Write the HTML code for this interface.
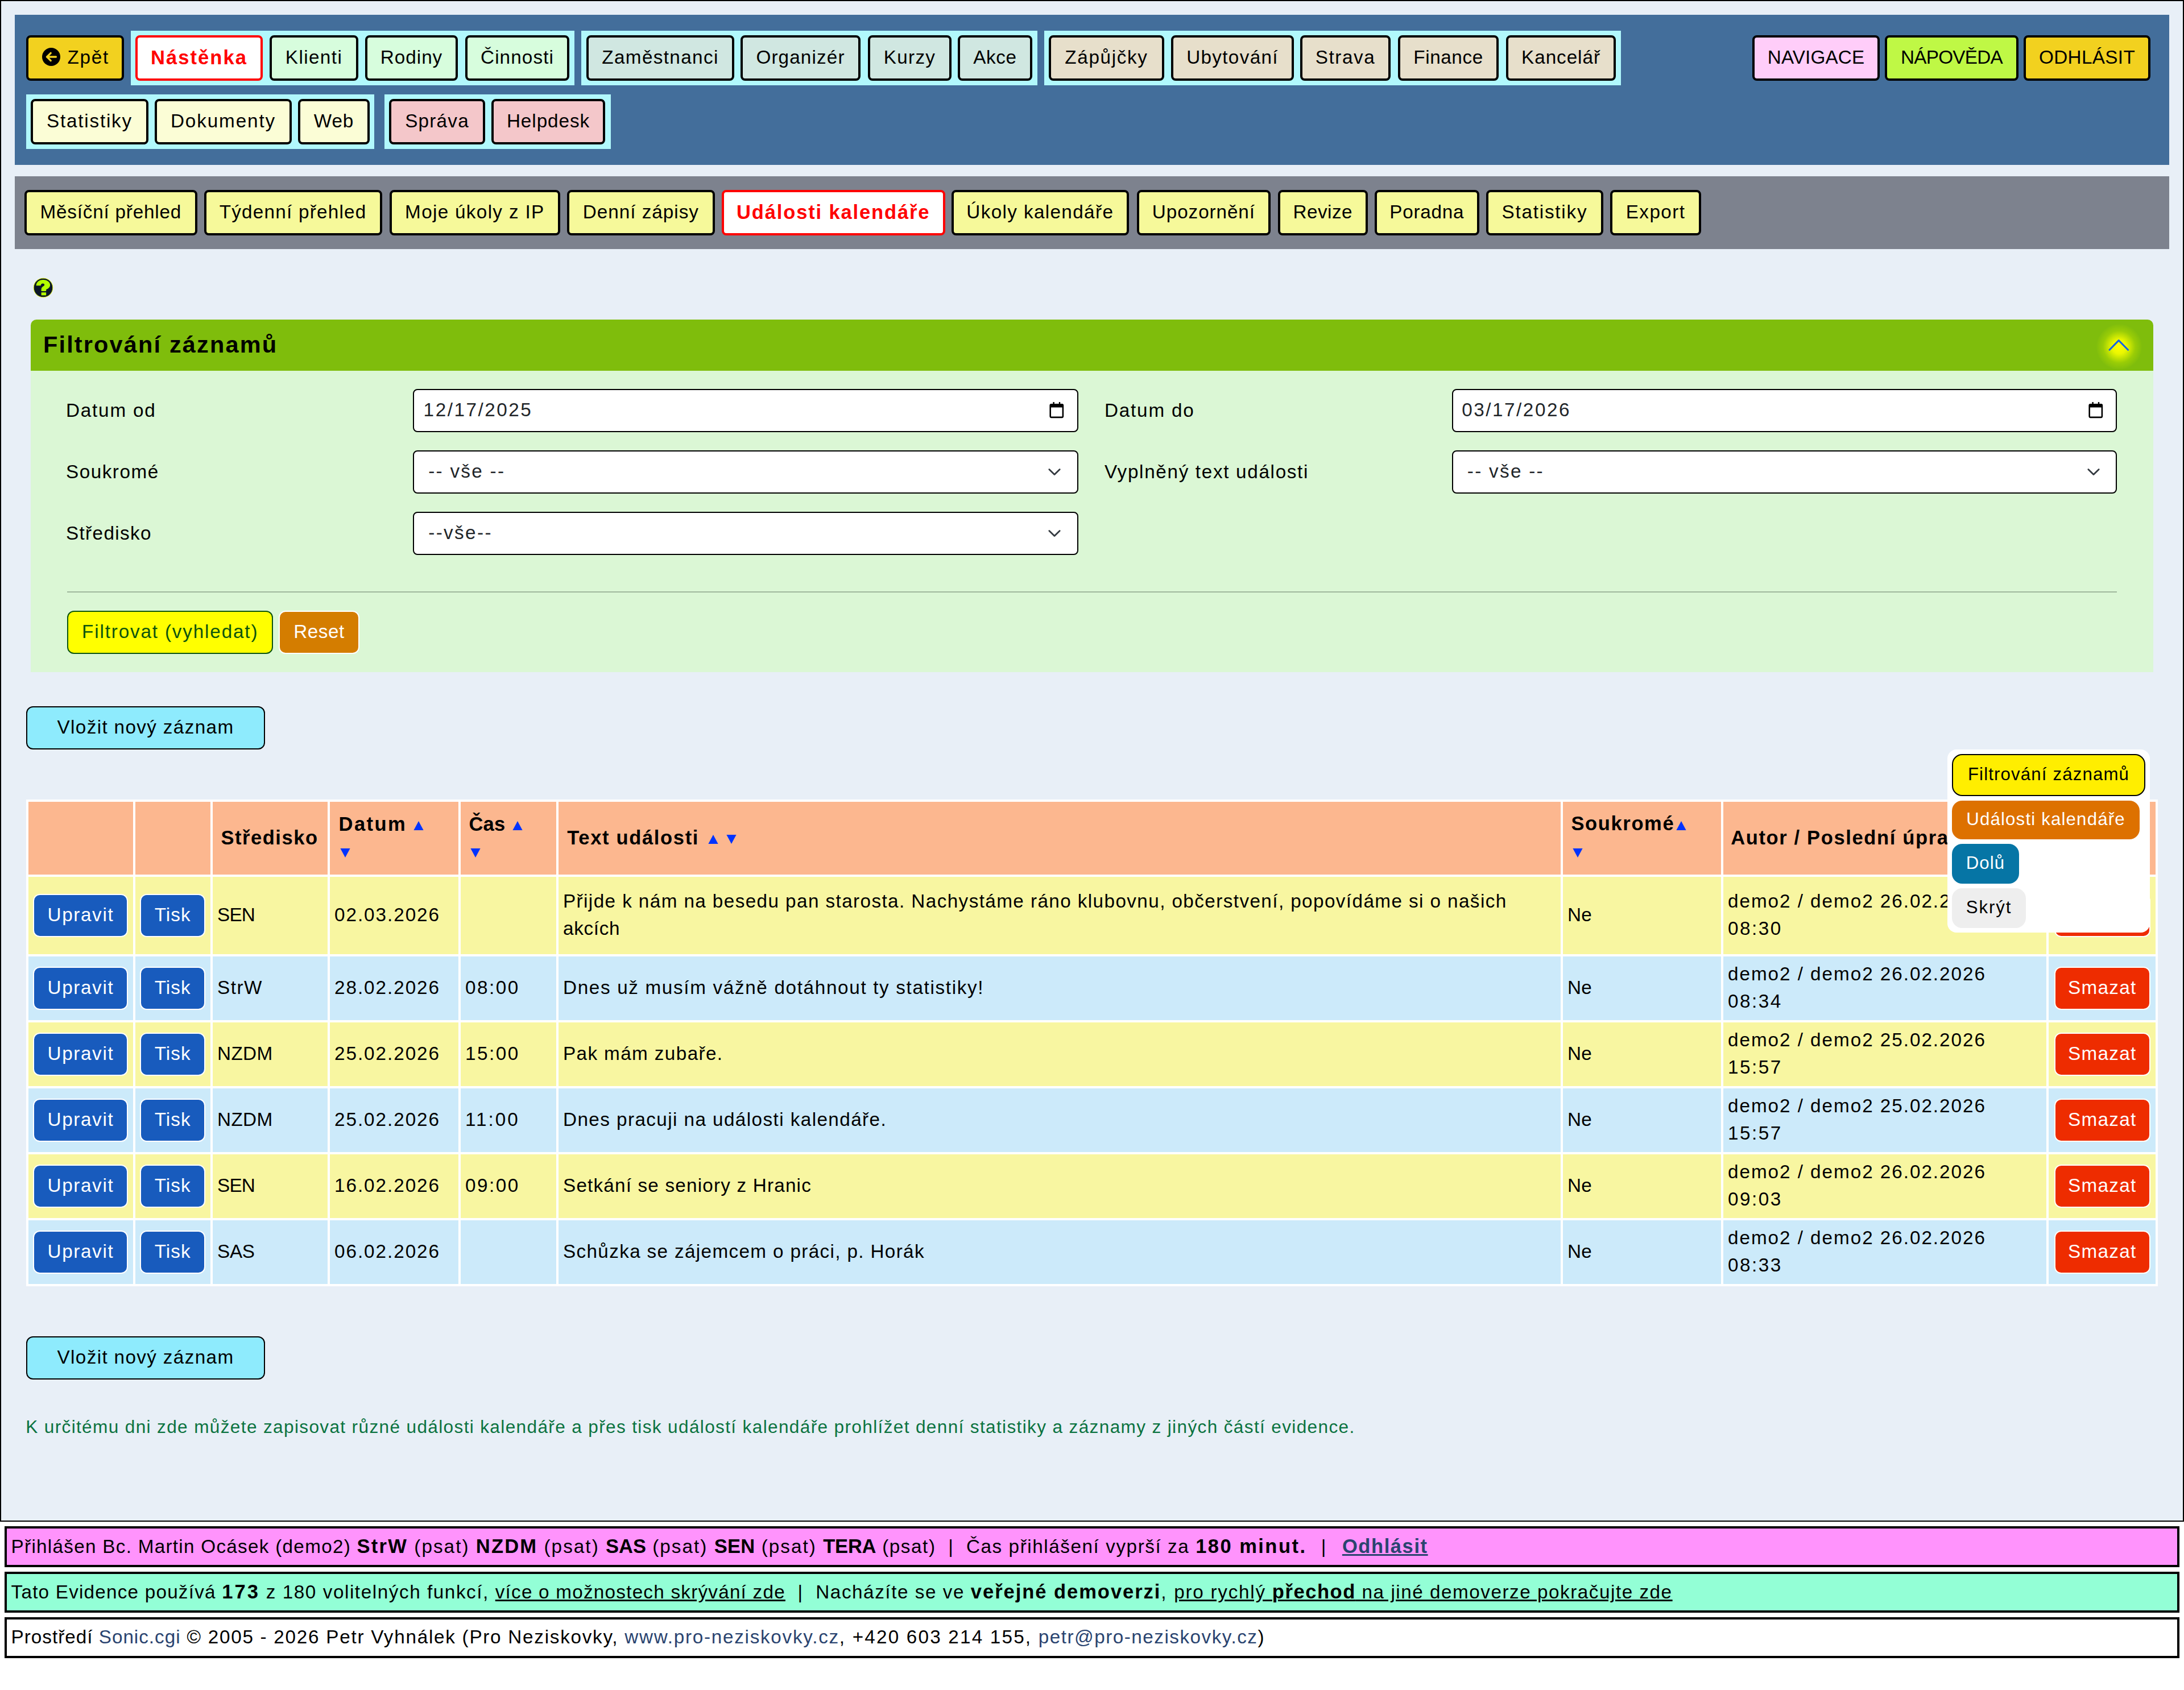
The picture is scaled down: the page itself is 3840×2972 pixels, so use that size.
<!DOCTYPE html>
<html lang="cs"><head><meta charset="utf-8"><title>Události kalendáře</title><style>
html{zoom:2;}
@media (max-width:2600px){html{zoom:1;}}
html,body{margin:0;padding:0;background:#fff;width:1920px;height:1486px;overflow:hidden;}
body{position:relative;font-family:'Liberation Sans', sans-serif;font-size:16px;color:#000;}
div{position:absolute;box-sizing:border-box;}
.b{display:flex;align-items:center;justify-content:center;white-space:nowrap;line-height:20px;padding-bottom:1px;}
.tx{white-space:pre;}
.m{white-space:pre;}
</style></head>
<body>
<div style="left:0px;top:0px;width:1920px;height:1338px;background:#e8eff7;border:1px solid #000;box-sizing:border-box;"></div>
<div style="left:13px;top:13px;width:1894px;height:132px;background:#436e9b;"></div>
<div style="left:115px;top:27px;width:390px;height:48px;background:#b1f8fc;"></div>
<div style="left:511px;top:27px;width:401px;height:48px;background:#b1f8fc;"></div>
<div style="left:918px;top:27px;width:507px;height:48px;background:#b1f8fc;"></div>
<div style="left:23px;top:83px;width:306px;height:48px;background:#b1f8fc;"></div>
<div style="left:338px;top:83px;width:199px;height:48px;background:#b1f8fc;"></div>
<div style="left:23px;top:31px;width:86px;height:40px;background:#f2d11f;border:2px solid #000;border-radius:4px;"><svg width="16" height="16" viewBox="0 0 16 16" style="position:absolute;left:12px;top:9px"><circle cx="8" cy="8" r="8" fill="#000"/><path d="M12.2 8H4.2M7.6 4.7L4.3 8L7.6 11.3" stroke="#f2d11f" stroke-width="1.7" fill="none" stroke-linecap="round" stroke-linejoin="round"/></svg><div class="tx" style="left:34.2px;top:5.3px;line-height:24px"><span class="m" style="font-size:16.64px;letter-spacing:0.861px;">Zpět</span></div></div>
<div class="b" style="left:119px;top:31px;width:112px;height:40px;background:#fff;border:2px solid #f00;border-radius:4px;"><span class="m" style="font-size:17.28px;font-weight:bold;color:#f00;letter-spacing:1.028px;">Nástěnka</span></div>
<div class="b" style="left:237px;top:31px;width:78px;height:40px;background:#d7fddd;border:2px solid #000;border-radius:4px;"><span class="m" style="font-size:16.64px;color:#000;letter-spacing:0.696px;">Klienti</span></div>
<div class="b" style="left:321px;top:31px;width:81.5px;height:40px;background:#d7fddd;border:2px solid #000;border-radius:4px;"><span class="m" style="font-size:16.64px;color:#000;letter-spacing:0.495px;">Rodiny</span></div>
<div class="b" style="left:409px;top:31px;width:91.5px;height:40px;background:#d7fddd;border:2px solid #000;border-radius:4px;"><span class="m" style="font-size:16.64px;color:#000;letter-spacing:0.551px;">Činnosti</span></div>
<div class="b" style="left:515.5px;top:31px;width:130.0px;height:40px;background:#d0e7e1;border:2px solid #000;border-radius:4px;"><span class="m" style="font-size:16.64px;color:#000;letter-spacing:0.684px;">Zaměstnanci</span></div>
<div class="b" style="left:651px;top:31px;width:105.5px;height:40px;background:#d0e7e1;border:2px solid #000;border-radius:4px;"><span class="m" style="font-size:16.64px;color:#000;letter-spacing:0.565px;">Organizér</span></div>
<div class="b" style="left:763px;top:31px;width:73.5px;height:40px;background:#d0e7e1;border:2px solid #000;border-radius:4px;"><span class="m" style="font-size:16.64px;color:#000;letter-spacing:0.644px;">Kurzy</span></div>
<div class="b" style="left:842px;top:31px;width:65.5px;height:40px;background:#d0e7e1;border:2px solid #000;border-radius:4px;"><span class="m" style="font-size:16.64px;color:#000;letter-spacing:0.305px;">Akce</span></div>
<div class="b" style="left:922px;top:31px;width:101.5px;height:40px;background:#e7dfcb;border:2px solid #000;border-radius:4px;"><span class="m" style="font-size:16.64px;color:#000;letter-spacing:0.823px;">Zápůjčky</span></div>
<div class="b" style="left:1029.5px;top:31px;width:108.0px;height:40px;background:#e7dfcb;border:2px solid #000;border-radius:4px;"><span class="m" style="font-size:16.64px;color:#000;letter-spacing:0.663px;">Ubytování</span></div>
<div class="b" style="left:1143px;top:31px;width:79.5px;height:40px;background:#e7dfcb;border:2px solid #000;border-radius:4px;"><span class="m" style="font-size:16.64px;color:#000;letter-spacing:0.775px;">Strava</span></div>
<div class="b" style="left:1229px;top:31px;width:88.5px;height:40px;background:#e7dfcb;border:2px solid #000;border-radius:4px;"><span class="m" style="font-size:16.64px;color:#000;letter-spacing:0.296px;">Finance</span></div>
<div class="b" style="left:1324px;top:31px;width:96.5px;height:40px;background:#e7dfcb;border:2px solid #000;border-radius:4px;"><span class="m" style="font-size:16.64px;color:#000;letter-spacing:0.470px;">Kancelář</span></div>
<div class="b" style="left:1540.5px;top:31px;width:112.0px;height:40px;background:#ffcdf9;border:2px solid #000;border-radius:4px;"><span class="m" style="font-size:16.64px;color:#000;letter-spacing:0.061px;">NAVIGACE</span></div>
<div class="b" style="left:1657px;top:31px;width:117.5px;height:40px;background:#bff845;border:2px solid #000;border-radius:4px;"><span class="m" style="font-size:16.64px;color:#000;letter-spacing:-0.367px;">NÁPOVĚDA</span></div>
<div class="b" style="left:1779px;top:31px;width:111.5px;height:40px;background:#f2d11f;border:2px solid #000;border-radius:4px;"><span class="m" style="font-size:16.64px;color:#000;letter-spacing:0.173px;">ODHLÁSIT</span></div>
<div class="b" style="left:27px;top:87px;width:103.5px;height:40px;background:#fbfdd6;border:2px solid #000;border-radius:4px;"><span class="m" style="font-size:16.64px;color:#000;letter-spacing:0.887px;">Statistiky</span></div>
<div class="b" style="left:136px;top:87px;width:120.5px;height:40px;background:#fbfdd6;border:2px solid #000;border-radius:4px;"><span class="m" style="font-size:16.64px;color:#000;letter-spacing:0.943px;">Dokumenty</span></div>
<div class="b" style="left:262px;top:87px;width:63px;height:40px;background:#fbfdd6;border:2px solid #000;border-radius:4px;"><span class="m" style="font-size:16.64px;color:#000;letter-spacing:0.477px;">Web</span></div>
<div class="b" style="left:342px;top:87px;width:84.5px;height:40px;background:#f4c7ca;border:2px solid #000;border-radius:4px;"><span class="m" style="font-size:16.64px;color:#000;letter-spacing:0.611px;">Správa</span></div>
<div class="b" style="left:432px;top:87px;width:100px;height:40px;background:#f4c7ca;border:2px solid #000;border-radius:4px;"><span class="m" style="font-size:16.64px;color:#000;letter-spacing:0.469px;">Helpdesk</span></div>
<div style="left:13px;top:155px;width:1894px;height:64px;background:#7d828e;"></div>
<div class="b" style="left:21.3px;top:167px;width:152.2px;height:40px;background:#f6f99a;border:2px solid #000;border-radius:4px;"><span class="m" style="font-size:16.64px;color:#000;letter-spacing:0.402px;">Měsíční přehled</span></div>
<div class="b" style="left:179.3px;top:167px;width:156.5px;height:40px;background:#f6f99a;border:2px solid #000;border-radius:4px;"><span class="m" style="font-size:16.64px;color:#000;letter-spacing:0.612px;">Týdenní přehled</span></div>
<div class="b" style="left:342.3px;top:167px;width:150.2px;height:40px;background:#f6f99a;border:2px solid #000;border-radius:4px;"><span class="m" style="font-size:16.64px;color:#000;letter-spacing:0.661px;">Moje úkoly z IP</span></div>
<div class="b" style="left:498.5px;top:167px;width:129.9px;height:40px;background:#f6f99a;border:2px solid #000;border-radius:4px;"><span class="m" style="font-size:16.64px;color:#000;letter-spacing:0.496px;">Denní zápisy</span></div>
<div class="b" style="left:634.4px;top:167px;width:196.4px;height:40px;background:#fff;border:2px solid #f00;border-radius:4px;"><span class="m" style="font-size:17.28px;font-weight:bold;color:#f00;letter-spacing:0.917px;">Události kalendáře</span></div>
<div class="b" style="left:836.3px;top:167px;width:156.2px;height:40px;background:#f6f99a;border:2px solid #000;border-radius:4px;"><span class="m" style="font-size:16.64px;color:#000;letter-spacing:0.682px;">Úkoly kalendáře</span></div>
<div class="b" style="left:999.6px;top:167px;width:117.2px;height:40px;background:#f6f99a;border:2px solid #000;border-radius:4px;"><span class="m" style="font-size:16.64px;color:#000;letter-spacing:0.452px;">Upozornění</span></div>
<div class="b" style="left:1123.4px;top:167px;width:79.0px;height:40px;background:#f6f99a;border:2px solid #000;border-radius:4px;"><span class="m" style="font-size:16.64px;color:#000;letter-spacing:0.242px;">Revize</span></div>
<div class="b" style="left:1208.3px;top:167px;width:92.1px;height:40px;background:#f6f99a;border:2px solid #000;border-radius:4px;"><span class="m" style="font-size:16.64px;color:#000;letter-spacing:0.365px;">Poradna</span></div>
<div class="b" style="left:1306.5px;top:167px;width:102.9px;height:40px;background:#f6f99a;border:2px solid #000;border-radius:4px;"><span class="m" style="font-size:16.64px;color:#000;letter-spacing:0.887px;">Statistiky</span></div>
<div class="b" style="left:1415.5px;top:167px;width:80.1px;height:40px;background:#f6f99a;border:2px solid #000;border-radius:4px;"><span class="m" style="font-size:16.64px;color:#000;letter-spacing:0.712px;">Export</span></div>
<svg style="position:absolute;left:29.05px;top:243.9px" width="18" height="18" viewBox="0 0 18 18"><circle cx="9" cy="9" r="8.4" fill="#0b1628" stroke="#eaff00" stroke-width="0.45"/><path d="M2.78 7.16C2.9 4.0 5.6 2.02 8.9 2.02C12.4 2.02 15.03 4.1 15.03 6.6C15.03 8.9 13.2 9.7 11.57 10.6V12.04H7.31V10.4C7.31 8.9 8.3 8.2 9.4 7.5C9.9 7.2 10.1 6.9 10.1 6.5C10.1 5.7 9.3 5.3 8.6 5.3C7.6 5.3 6.9 6.0 6.78 7.16Z" fill="#b3ff00"/><rect x="7.31" y="13.11" width="4.26" height="2.57" fill="#b3ff00"/></svg>
<div style="left:27px;top:281px;width:1866px;height:45px;background:#7fbd0c;border-radius:5px 5px 0 0;"></div>
<div style="left:27px;top:326px;width:1866px;height:265px;background:#dbf7d5;"></div>
<div class="tx" style="left:38px;top:290.76px;line-height:24px;"><span class="m" style="font-size:20.736px;font-weight:bold;letter-spacing:1.080px;">Filtrování záznamů</span></div>
<div style="position:absolute;left:1843px;top:285px;width:40px;height:40px;border-radius:50%;background:radial-gradient(circle at center, rgba(255,255,0,1) 0%, rgba(240,250,0,0.95) 22%, rgba(180,220,0,0.5) 50%, rgba(127,189,12,0) 72%);"></div>
<svg style="position:absolute;left:1852px;top:296px" width="22" height="14" viewBox="0 0 22 14"><path d="M2.5 11.6L10.6 3.3L18.8 11.6" stroke="#1463e6" stroke-width="1.5" fill="none" stroke-linecap="round" stroke-linejoin="round"/></svg>
<div class="tx" style="left:58px;top:350.96px;line-height:20px;"><span class="m" style="font-size:16.64px;letter-spacing:0.889px;">Datum od</span></div>
<div class="tx" style="left:58px;top:404.96px;line-height:20px;"><span class="m" style="font-size:16.64px;letter-spacing:0.753px;">Soukromé</span></div>
<div class="tx" style="left:58px;top:458.96px;line-height:20px;"><span class="m" style="font-size:16.64px;letter-spacing:0.671px;">Středisko</span></div>
<div class="tx" style="left:971px;top:350.96px;line-height:20px;"><span class="m" style="font-size:16.64px;letter-spacing:0.889px;">Datum do</span></div>
<div class="tx" style="left:971px;top:404.96px;line-height:20px;"><span class="m" style="font-size:16.64px;letter-spacing:0.834px;">Vyplněný text události</span></div>
<div style="left:363px;top:342px;width:585px;height:38px;background:#fff;border:1px solid #000;border-radius:4px;box-sizing:border-box;"></div>
<div style="left:363px;top:396px;width:585px;height:38px;background:#fff;border:1px solid #000;border-radius:4px;box-sizing:border-box;"></div>
<div style="left:1276.4px;top:342px;width:584.6px;height:38px;background:#fff;border:1px solid #000;border-radius:4px;box-sizing:border-box;"></div>
<div style="left:1276.4px;top:396px;width:584.6px;height:38px;background:#fff;border:1px solid #000;border-radius:4px;box-sizing:border-box;"></div>
<div style="left:363px;top:450px;width:585px;height:38px;background:#fff;border:1px solid #000;border-radius:4px;box-sizing:border-box;"></div>
<svg style="position:absolute;left:922.5px;top:353px" width="13" height="15" viewBox="0 0 13 15"><rect x="0.85" y="2.65" width="11.1" height="11.3" rx="0.9" fill="none" stroke="#000" stroke-width="1.3"/><rect x="0.5" y="2.3" width="11.8" height="2.9" rx="0.8" fill="#000"/><rect x="3.2" y="0.5" width="1.2" height="2.2" fill="#000"/><rect x="8.4" y="0.5" width="1.2" height="2.2" fill="#000"/></svg>
<svg style="position:absolute;left:1835.9px;top:353px" width="13" height="15" viewBox="0 0 13 15"><rect x="0.85" y="2.65" width="11.1" height="11.3" rx="0.9" fill="none" stroke="#000" stroke-width="1.3"/><rect x="0.5" y="2.3" width="11.8" height="2.9" rx="0.8" fill="#000"/><rect x="3.2" y="0.5" width="1.2" height="2.2" fill="#000"/><rect x="8.4" y="0.5" width="1.2" height="2.2" fill="#000"/></svg>
<svg style="position:absolute;left:920px;top:410.5px" width="14" height="9" viewBox="0 0 14 9"><path d="M2.4 2.2L7 6.8L11.6 2.2" stroke="#343a40" stroke-width="1.4" fill="none" stroke-linecap="round" stroke-linejoin="round"/></svg>
<svg style="position:absolute;left:1833.4px;top:410.5px" width="14" height="9" viewBox="0 0 14 9"><path d="M2.4 2.2L7 6.8L11.6 2.2" stroke="#343a40" stroke-width="1.4" fill="none" stroke-linecap="round" stroke-linejoin="round"/></svg>
<svg style="position:absolute;left:920px;top:464.5px" width="14" height="9" viewBox="0 0 14 9"><path d="M2.4 2.2L7 6.8L11.6 2.2" stroke="#343a40" stroke-width="1.4" fill="none" stroke-linecap="round" stroke-linejoin="round"/></svg>
<div class="tx" style="left:372.3px;top:350.66px;line-height:20px;"><span class="m" style="font-size:16.64px;color:#212529;letter-spacing:1.266px;">12/17/2025</span></div>
<div class="tx" style="left:1285.1px;top:350.66px;line-height:20px;"><span class="m" style="font-size:16.64px;color:#212529;letter-spacing:1.266px;">03/17/2026</span></div>
<div class="tx" style="left:376.6px;top:404.66px;line-height:20px;"><span class="m" style="font-size:16.64px;color:#212529;letter-spacing:1.143px;">-- vše --</span></div>
<div class="tx" style="left:1289.9px;top:404.66px;line-height:20px;"><span class="m" style="font-size:16.64px;color:#212529;letter-spacing:1.143px;">-- vše --</span></div>
<div class="tx" style="left:376.6px;top:458.66px;line-height:20px;"><span class="m" style="font-size:16.64px;color:#212529;letter-spacing:1.183px;">--vše--</span></div>
<div style="left:59px;top:520px;width:1802px;height:1px;background:#9fb79d;"></div>
<div class="b" style="left:59px;top:537px;width:181.2px;height:38px;background:#ffff00;border:1px solid #0d550d;border-radius:6px;"><span class="m" style="font-size:16.64px;color:#0d550d;letter-spacing:0.917px;">Filtrovat (vyhledat)</span></div>
<div class="b" style="left:244.9px;top:537px;width:71.2px;height:38px;background:#d47d00;border:1px solid #fff;border-radius:6px;"><span class="m" style="font-size:16.64px;color:#fff;letter-spacing:0.261px;">Reset</span></div>
<div class="b" style="left:23px;top:621px;width:210px;height:38px;background:#8eebfd;border:1px solid #000;border-radius:6px;"><span class="m" style="font-size:16.64px;color:#000;letter-spacing:0.675px;">Vložit nový záznam</span></div>
<div style="left:23px;top:703px;width:1874px;height:428px;background:#fff;"></div>
<div style="left:25px;top:705px;width:92px;height:64px;background:#fcb78f;"></div>
<div style="left:119px;top:705px;width:66px;height:64px;background:#fcb78f;"></div>
<div style="left:187px;top:705px;width:101px;height:64px;background:#fcb78f;"></div>
<div style="left:290px;top:705px;width:113px;height:64px;background:#fcb78f;"></div>
<div style="left:405px;top:705px;width:84px;height:64px;background:#fcb78f;"></div>
<div style="left:491px;top:705px;width:881px;height:64px;background:#fcb78f;"></div>
<div style="left:1374px;top:705px;width:139px;height:64px;background:#fcb78f;"></div>
<div style="left:1515px;top:705px;width:284px;height:64px;background:#fcb78f;"></div>
<div style="left:1801px;top:705px;width:94px;height:64px;background:#fcb78f;"></div>
<div style="left:25px;top:771px;width:92px;height:68px;background:#f8f6a1;"></div>
<div style="left:119px;top:771px;width:66px;height:68px;background:#f8f6a1;"></div>
<div style="left:187px;top:771px;width:101px;height:68px;background:#f8f6a1;"></div>
<div style="left:290px;top:771px;width:113px;height:68px;background:#f8f6a1;"></div>
<div style="left:405px;top:771px;width:84px;height:68px;background:#f8f6a1;"></div>
<div style="left:491px;top:771px;width:881px;height:68px;background:#f8f6a1;"></div>
<div style="left:1374px;top:771px;width:139px;height:68px;background:#f8f6a1;"></div>
<div style="left:1515px;top:771px;width:284px;height:68px;background:#f8f6a1;"></div>
<div style="left:1801px;top:771px;width:94px;height:68px;background:#f8f6a1;"></div>
<div style="left:25px;top:841px;width:92px;height:56px;background:#cceafa;"></div>
<div style="left:119px;top:841px;width:66px;height:56px;background:#cceafa;"></div>
<div style="left:187px;top:841px;width:101px;height:56px;background:#cceafa;"></div>
<div style="left:290px;top:841px;width:113px;height:56px;background:#cceafa;"></div>
<div style="left:405px;top:841px;width:84px;height:56px;background:#cceafa;"></div>
<div style="left:491px;top:841px;width:881px;height:56px;background:#cceafa;"></div>
<div style="left:1374px;top:841px;width:139px;height:56px;background:#cceafa;"></div>
<div style="left:1515px;top:841px;width:284px;height:56px;background:#cceafa;"></div>
<div style="left:1801px;top:841px;width:94px;height:56px;background:#cceafa;"></div>
<div style="left:25px;top:899px;width:92px;height:56px;background:#f8f6a1;"></div>
<div style="left:119px;top:899px;width:66px;height:56px;background:#f8f6a1;"></div>
<div style="left:187px;top:899px;width:101px;height:56px;background:#f8f6a1;"></div>
<div style="left:290px;top:899px;width:113px;height:56px;background:#f8f6a1;"></div>
<div style="left:405px;top:899px;width:84px;height:56px;background:#f8f6a1;"></div>
<div style="left:491px;top:899px;width:881px;height:56px;background:#f8f6a1;"></div>
<div style="left:1374px;top:899px;width:139px;height:56px;background:#f8f6a1;"></div>
<div style="left:1515px;top:899px;width:284px;height:56px;background:#f8f6a1;"></div>
<div style="left:1801px;top:899px;width:94px;height:56px;background:#f8f6a1;"></div>
<div style="left:25px;top:957px;width:92px;height:56px;background:#cceafa;"></div>
<div style="left:119px;top:957px;width:66px;height:56px;background:#cceafa;"></div>
<div style="left:187px;top:957px;width:101px;height:56px;background:#cceafa;"></div>
<div style="left:290px;top:957px;width:113px;height:56px;background:#cceafa;"></div>
<div style="left:405px;top:957px;width:84px;height:56px;background:#cceafa;"></div>
<div style="left:491px;top:957px;width:881px;height:56px;background:#cceafa;"></div>
<div style="left:1374px;top:957px;width:139px;height:56px;background:#cceafa;"></div>
<div style="left:1515px;top:957px;width:284px;height:56px;background:#cceafa;"></div>
<div style="left:1801px;top:957px;width:94px;height:56px;background:#cceafa;"></div>
<div style="left:25px;top:1015px;width:92px;height:56px;background:#f8f6a1;"></div>
<div style="left:119px;top:1015px;width:66px;height:56px;background:#f8f6a1;"></div>
<div style="left:187px;top:1015px;width:101px;height:56px;background:#f8f6a1;"></div>
<div style="left:290px;top:1015px;width:113px;height:56px;background:#f8f6a1;"></div>
<div style="left:405px;top:1015px;width:84px;height:56px;background:#f8f6a1;"></div>
<div style="left:491px;top:1015px;width:881px;height:56px;background:#f8f6a1;"></div>
<div style="left:1374px;top:1015px;width:139px;height:56px;background:#f8f6a1;"></div>
<div style="left:1515px;top:1015px;width:284px;height:56px;background:#f8f6a1;"></div>
<div style="left:1801px;top:1015px;width:94px;height:56px;background:#f8f6a1;"></div>
<div style="left:25px;top:1073px;width:92px;height:56px;background:#cceafa;"></div>
<div style="left:119px;top:1073px;width:66px;height:56px;background:#cceafa;"></div>
<div style="left:187px;top:1073px;width:101px;height:56px;background:#cceafa;"></div>
<div style="left:290px;top:1073px;width:113px;height:56px;background:#cceafa;"></div>
<div style="left:405px;top:1073px;width:84px;height:56px;background:#cceafa;"></div>
<div style="left:491px;top:1073px;width:881px;height:56px;background:#cceafa;"></div>
<div style="left:1374px;top:1073px;width:139px;height:56px;background:#cceafa;"></div>
<div style="left:1515px;top:1073px;width:284px;height:56px;background:#cceafa;"></div>
<div style="left:1801px;top:1073px;width:94px;height:56px;background:#cceafa;"></div>
<div class="tx" style="left:194.2px;top:726.56px;line-height:20px;"><span class="m" style="font-size:17.28px;font-weight:bold;letter-spacing:0.762px;">Středisko</span></div>
<div class="tx" style="left:297.8px;top:714.46px;line-height:20px;"><span class="m" style="font-size:17.28px;font-weight:bold;letter-spacing:1.208px;">Datum</span></div>
<svg style="position:absolute;left:363.7px;top:722px" width="9" height="8" viewBox="0 0 9 8"><path d="M4.5 0L8.8 8H0.2z" fill="#0033ff"/></svg>
<svg style="position:absolute;left:298.8px;top:746px" width="9" height="8" viewBox="0 0 9 8"><path d="M0.2 0H8.8L4.5 8z" fill="#0033ff"/></svg>
<div class="tx" style="left:412.2px;top:714.46px;line-height:20px;"><span class="m" style="font-size:17.28px;font-weight:bold;letter-spacing:0.122px;">Čas</span></div>
<svg style="position:absolute;left:450.6px;top:722px" width="9" height="8" viewBox="0 0 9 8"><path d="M4.5 0L8.8 8H0.2z" fill="#0033ff"/></svg>
<svg style="position:absolute;left:413.6px;top:746px" width="9" height="8" viewBox="0 0 9 8"><path d="M0.2 0H8.8L4.5 8z" fill="#0033ff"/></svg>
<div class="tx" style="left:498.6px;top:726.46px;line-height:20px;"><span class="m" style="font-size:17.28px;font-weight:bold;letter-spacing:0.823px;">Text události</span></div>
<svg style="position:absolute;left:622.6px;top:733.8px" width="9" height="8" viewBox="0 0 9 8"><path d="M4.5 0L8.8 8H0.2z" fill="#0033ff"/></svg>
<svg style="position:absolute;left:638.7px;top:733.8px" width="9" height="8" viewBox="0 0 9 8"><path d="M0.2 0H8.8L4.5 8z" fill="#0033ff"/></svg>
<div class="tx" style="left:1381.2px;top:714.06px;line-height:20px;"><span class="m" style="font-size:17.28px;font-weight:bold;letter-spacing:0.810px;">Soukromé</span></div>
<svg style="position:absolute;left:1473.5px;top:722px" width="9" height="8" viewBox="0 0 9 8"><path d="M4.5 0L8.8 8H0.2z" fill="#0033ff"/></svg>
<svg style="position:absolute;left:1382.4px;top:746px" width="9" height="8" viewBox="0 0 9 8"><path d="M0.2 0H8.8L4.5 8z" fill="#0033ff"/></svg>
<div class="tx" style="left:1521.6px;top:726.36px;line-height:20px;"><span class="m" style="font-size:17.28px;font-weight:bold;letter-spacing:0.810px;">Autor / Poslední úprava</span></div>
<div class="b" style="left:29.2px;top:786.0px;width:83.5px;height:38.0px;background:#185bbd;border:1px solid #fff;border-radius:6px;"><span class="m" style="font-size:16.64px;color:#fff;letter-spacing:0.816px;">Upravit</span></div>
<div class="b" style="left:123px;top:786.0px;width:57.7px;height:38.0px;background:#185bbd;border:1px solid #fff;border-radius:6px;"><span class="m" style="font-size:16.64px;color:#fff;letter-spacing:0.543px;">Tisk</span></div>
<div class="b" style="left:1806px;top:786.0px;width:84.3px;height:38.0px;background:#ee2c00;border:1px solid #fff;border-radius:6px;"><span class="m" style="font-size:16.64px;color:#fff;letter-spacing:0.647px;">Smazat</span></div>
<div class="tx" style="left:191px;top:792.51px;line-height:24px;"><span class="m" style="font-size:16.64px;letter-spacing:-0.396px;">SEN</span></div>
<div class="tx" style="left:294px;top:792.51px;line-height:24px;"><span class="m" style="font-size:16.64px;letter-spacing:0.977px;">02.03.2026</span></div>
<div class="tx" style="left:495px;top:780.51px;line-height:24px;"><span class="m" style="font-size:16.64px;letter-spacing:0.703px;">Přijde k nám na besedu pan starosta. Nachystáme ráno klubovnu, občerstvení, popovídáme si o našich</span></div>
<div class="tx" style="left:495px;top:804.51px;line-height:24px;"><span class="m" style="font-size:16.64px;letter-spacing:0.342px;">akcích</span></div>
<div class="tx" style="left:1378px;top:792.51px;line-height:24px;"><span class="m" style="font-size:16.64px;letter-spacing:0.113px;">Ne</span></div>
<div class="tx" style="left:1519px;top:780.51px;line-height:24px;"><span class="m" style="font-size:16.64px;letter-spacing:0.979px;">demo2 / demo2 26.02.2026</span></div>
<div class="tx" style="left:1519px;top:804.51px;line-height:24px;"><span class="m" style="font-size:16.64px;letter-spacing:1.266px;">08:30</span></div>
<div class="b" style="left:29.2px;top:850.0px;width:83.5px;height:38.0px;background:#185bbd;border:1px solid #fff;border-radius:6px;"><span class="m" style="font-size:16.64px;color:#fff;letter-spacing:0.816px;">Upravit</span></div>
<div class="b" style="left:123px;top:850.0px;width:57.7px;height:38.0px;background:#185bbd;border:1px solid #fff;border-radius:6px;"><span class="m" style="font-size:16.64px;color:#fff;letter-spacing:0.543px;">Tisk</span></div>
<div class="b" style="left:1806px;top:850.0px;width:84.3px;height:38.0px;background:#ee2c00;border:1px solid #fff;border-radius:6px;"><span class="m" style="font-size:16.64px;color:#fff;letter-spacing:0.647px;">Smazat</span></div>
<div class="tx" style="left:191px;top:856.51px;line-height:24px;"><span class="m" style="font-size:16.64px;letter-spacing:0.746px;">StrW</span></div>
<div class="tx" style="left:294px;top:856.51px;line-height:24px;"><span class="m" style="font-size:16.64px;letter-spacing:0.977px;">28.02.2026</span></div>
<div class="tx" style="left:409px;top:856.51px;line-height:24px;"><span class="m" style="font-size:16.64px;letter-spacing:1.266px;">08:00</span></div>
<div class="tx" style="left:495px;top:856.51px;line-height:24px;"><span class="m" style="font-size:16.64px;letter-spacing:0.827px;">Dnes už musím vážně dotáhnout ty statistiky!</span></div>
<div class="tx" style="left:1378px;top:856.51px;line-height:24px;"><span class="m" style="font-size:16.64px;letter-spacing:0.113px;">Ne</span></div>
<div class="tx" style="left:1519px;top:844.51px;line-height:24px;"><span class="m" style="font-size:16.64px;letter-spacing:0.979px;">demo2 / demo2 26.02.2026</span></div>
<div class="tx" style="left:1519px;top:868.51px;line-height:24px;"><span class="m" style="font-size:16.64px;letter-spacing:1.266px;">08:34</span></div>
<div class="b" style="left:29.2px;top:908.0px;width:83.5px;height:38.0px;background:#185bbd;border:1px solid #fff;border-radius:6px;"><span class="m" style="font-size:16.64px;color:#fff;letter-spacing:0.816px;">Upravit</span></div>
<div class="b" style="left:123px;top:908.0px;width:57.7px;height:38.0px;background:#185bbd;border:1px solid #fff;border-radius:6px;"><span class="m" style="font-size:16.64px;color:#fff;letter-spacing:0.543px;">Tisk</span></div>
<div class="b" style="left:1806px;top:908.0px;width:84.3px;height:38.0px;background:#ee2c00;border:1px solid #fff;border-radius:6px;"><span class="m" style="font-size:16.64px;color:#fff;letter-spacing:0.647px;">Smazat</span></div>
<div class="tx" style="left:191px;top:914.51px;line-height:24px;"><span class="m" style="font-size:16.64px;letter-spacing:0.184px;">NZDM</span></div>
<div class="tx" style="left:294px;top:914.51px;line-height:24px;"><span class="m" style="font-size:16.64px;letter-spacing:0.977px;">25.02.2026</span></div>
<div class="tx" style="left:409px;top:914.51px;line-height:24px;"><span class="m" style="font-size:16.64px;letter-spacing:1.266px;">15:00</span></div>
<div class="tx" style="left:495px;top:914.51px;line-height:24px;"><span class="m" style="font-size:16.64px;letter-spacing:0.694px;">Pak mám zubaře.</span></div>
<div class="tx" style="left:1378px;top:914.51px;line-height:24px;"><span class="m" style="font-size:16.64px;letter-spacing:0.113px;">Ne</span></div>
<div class="tx" style="left:1519px;top:902.51px;line-height:24px;"><span class="m" style="font-size:16.64px;letter-spacing:0.979px;">demo2 / demo2 25.02.2026</span></div>
<div class="tx" style="left:1519px;top:926.51px;line-height:24px;"><span class="m" style="font-size:16.64px;letter-spacing:1.266px;">15:57</span></div>
<div class="b" style="left:29.2px;top:966.0px;width:83.5px;height:38.0px;background:#185bbd;border:1px solid #fff;border-radius:6px;"><span class="m" style="font-size:16.64px;color:#fff;letter-spacing:0.816px;">Upravit</span></div>
<div class="b" style="left:123px;top:966.0px;width:57.7px;height:38.0px;background:#185bbd;border:1px solid #fff;border-radius:6px;"><span class="m" style="font-size:16.64px;color:#fff;letter-spacing:0.543px;">Tisk</span></div>
<div class="b" style="left:1806px;top:966.0px;width:84.3px;height:38.0px;background:#ee2c00;border:1px solid #fff;border-radius:6px;"><span class="m" style="font-size:16.64px;color:#fff;letter-spacing:0.647px;">Smazat</span></div>
<div class="tx" style="left:191px;top:972.51px;line-height:24px;"><span class="m" style="font-size:16.64px;letter-spacing:0.184px;">NZDM</span></div>
<div class="tx" style="left:294px;top:972.51px;line-height:24px;"><span class="m" style="font-size:16.64px;letter-spacing:0.977px;">25.02.2026</span></div>
<div class="tx" style="left:409px;top:972.51px;line-height:24px;"><span class="m" style="font-size:16.64px;letter-spacing:1.512px;">11:00</span></div>
<div class="tx" style="left:495px;top:972.51px;line-height:24px;"><span class="m" style="font-size:16.64px;letter-spacing:0.708px;">Dnes pracuji na události kalendáře.</span></div>
<div class="tx" style="left:1378px;top:972.51px;line-height:24px;"><span class="m" style="font-size:16.64px;letter-spacing:0.113px;">Ne</span></div>
<div class="tx" style="left:1519px;top:960.51px;line-height:24px;"><span class="m" style="font-size:16.64px;letter-spacing:0.979px;">demo2 / demo2 25.02.2026</span></div>
<div class="tx" style="left:1519px;top:984.51px;line-height:24px;"><span class="m" style="font-size:16.64px;letter-spacing:1.266px;">15:57</span></div>
<div class="b" style="left:29.2px;top:1024.0px;width:83.5px;height:38.0px;background:#185bbd;border:1px solid #fff;border-radius:6px;"><span class="m" style="font-size:16.64px;color:#fff;letter-spacing:0.816px;">Upravit</span></div>
<div class="b" style="left:123px;top:1024.0px;width:57.7px;height:38.0px;background:#185bbd;border:1px solid #fff;border-radius:6px;"><span class="m" style="font-size:16.64px;color:#fff;letter-spacing:0.543px;">Tisk</span></div>
<div class="b" style="left:1806px;top:1024.0px;width:84.3px;height:38.0px;background:#ee2c00;border:1px solid #fff;border-radius:6px;"><span class="m" style="font-size:16.64px;color:#fff;letter-spacing:0.647px;">Smazat</span></div>
<div class="tx" style="left:191px;top:1030.51px;line-height:24px;"><span class="m" style="font-size:16.64px;letter-spacing:-0.396px;">SEN</span></div>
<div class="tx" style="left:294px;top:1030.51px;line-height:24px;"><span class="m" style="font-size:16.64px;letter-spacing:0.977px;">16.02.2026</span></div>
<div class="tx" style="left:409px;top:1030.51px;line-height:24px;"><span class="m" style="font-size:16.64px;letter-spacing:1.266px;">09:00</span></div>
<div class="tx" style="left:495px;top:1030.51px;line-height:24px;"><span class="m" style="font-size:16.64px;letter-spacing:0.594px;">Setkání se seniory z Hranic</span></div>
<div class="tx" style="left:1378px;top:1030.51px;line-height:24px;"><span class="m" style="font-size:16.64px;letter-spacing:0.113px;">Ne</span></div>
<div class="tx" style="left:1519px;top:1018.51px;line-height:24px;"><span class="m" style="font-size:16.64px;letter-spacing:0.979px;">demo2 / demo2 26.02.2026</span></div>
<div class="tx" style="left:1519px;top:1042.51px;line-height:24px;"><span class="m" style="font-size:16.64px;letter-spacing:1.266px;">09:03</span></div>
<div class="b" style="left:29.2px;top:1082.0px;width:83.5px;height:38.0px;background:#185bbd;border:1px solid #fff;border-radius:6px;"><span class="m" style="font-size:16.64px;color:#fff;letter-spacing:0.816px;">Upravit</span></div>
<div class="b" style="left:123px;top:1082.0px;width:57.7px;height:38.0px;background:#185bbd;border:1px solid #fff;border-radius:6px;"><span class="m" style="font-size:16.64px;color:#fff;letter-spacing:0.543px;">Tisk</span></div>
<div class="b" style="left:1806px;top:1082.0px;width:84.3px;height:38.0px;background:#ee2c00;border:1px solid #fff;border-radius:6px;"><span class="m" style="font-size:16.64px;color:#fff;letter-spacing:0.647px;">Smazat</span></div>
<div class="tx" style="left:191px;top:1088.51px;line-height:24px;"><span class="m" style="font-size:16.64px;letter-spacing:-0.156px;">SAS</span></div>
<div class="tx" style="left:294px;top:1088.51px;line-height:24px;"><span class="m" style="font-size:16.64px;letter-spacing:0.977px;">06.02.2026</span></div>
<div class="tx" style="left:495px;top:1088.51px;line-height:24px;"><span class="m" style="font-size:16.64px;letter-spacing:0.673px;">Schůzka se zájemcem o práci, p. Horák</span></div>
<div class="tx" style="left:1378px;top:1088.51px;line-height:24px;"><span class="m" style="font-size:16.64px;letter-spacing:0.113px;">Ne</span></div>
<div class="tx" style="left:1519px;top:1076.51px;line-height:24px;"><span class="m" style="font-size:16.64px;letter-spacing:0.979px;">demo2 / demo2 26.02.2026</span></div>
<div class="tx" style="left:1519px;top:1100.51px;line-height:24px;"><span class="m" style="font-size:16.64px;letter-spacing:1.266px;">08:33</span></div>
<div style="left:1712px;top:659px;width:178px;height:161px;background:#fff;border-radius:8px;"></div>
<div class="b" style="left:1716px;top:663px;width:170px;height:37px;background:#ffee00;border:1px solid #000;border-radius:9px;"><span class="m" style="font-size:15.6px;color:#000;letter-spacing:0.577px;">Filtrování záznamů</span></div>
<div class="b" style="left:1716px;top:704px;width:165px;height:34px;background:#dd7100;border:none;border-radius:9px;"><span class="m" style="font-size:15.6px;color:#fff;letter-spacing:0.591px;">Události kalendáře</span></div>
<div class="b" style="left:1716px;top:742px;width:59px;height:35px;background:#0675a5;border:none;border-radius:9px;"><span class="m" style="font-size:15.6px;color:#fff;letter-spacing:0.557px;">Dolů</span></div>
<div class="b" style="left:1716px;top:781px;width:65px;height:35px;background:#eeeeee;border:none;border-radius:9px;"><span class="m" style="font-size:15.6px;color:#000;letter-spacing:0.953px;">Skrýt</span></div>
<div class="b" style="left:23px;top:1175px;width:210px;height:38px;background:#8eebfd;border:1px solid #000;border-radius:6px;"><span class="m" style="font-size:16.64px;color:#000;letter-spacing:0.675px;">Vložit nový záznam</span></div>
<div class="tx" style="left:22.6px;top:1244.54px;line-height:20px;"><span class="m" style="font-size:15.808px;color:#0b7340;letter-spacing:0.668px;">K určitému dni zde můžete zapisovat různé události kalendáře a přes tisk událostí kalendáře prohlížet denní statistiky a záznamy z jiných částí evidence.</span></div>
<div style="left:4px;top:1342px;width:1912px;height:36px;background:#ff93fc;border:2px solid #000;box-sizing:border-box;"></div>
<div style="left:4px;top:1382px;width:1912px;height:36px;background:#93ffd6;border:2px solid #000;box-sizing:border-box;"></div>
<div style="left:4px;top:1422px;width:1912px;height:36px;background:#fff;border:2px solid #000;box-sizing:border-box;"></div>
<div class="tx" style="left:9.8px;top:1349.46px;line-height:20px;"><span class="m" style="font-size:16.64px;letter-spacing:0.638px;">Přihlášen Bc. Martin Ocásek (demo2) </span><span class="m" style="font-size:17.28px;font-weight:bold;letter-spacing:1.102px;">StrW</span><span class="m" style="font-size:16.64px;letter-spacing:1.019px;"> (psat) </span><span class="m" style="font-size:17.28px;font-weight:bold;letter-spacing:1.076px;">NZDM</span><span class="m" style="font-size:16.64px;letter-spacing:1.019px;"> (psat) </span><span class="m" style="font-size:17.28px;font-weight:bold;letter-spacing:-0.031px;">SAS</span><span class="m" style="font-size:16.64px;letter-spacing:1.019px;"> (psat) </span><span class="m" style="font-size:17.28px;font-weight:bold;letter-spacing:0.107px;">SEN</span><span class="m" style="font-size:16.64px;letter-spacing:1.019px;"> (psat) </span><span class="m" style="font-size:17.28px;font-weight:bold;letter-spacing:-0.119px;">TERA</span><span class="m" style="font-size:16.64px;letter-spacing:0.780px;"> (psat)  |  Čas přihlášení vyprší za </span><span class="m" style="font-size:17.28px;font-weight:bold;letter-spacing:1.220px;">180 minut.</span><span class="m" style="font-size:16.64px;letter-spacing:1.683px;">  |  </span><span class="m" style="font-size:17.28px;font-weight:bold;color:#2a4470;letter-spacing:0.784px;text-decoration:underline;">Odhlásit</span></div>
<div class="tx" style="left:9.8px;top:1389.46px;line-height:20px;"><span class="m" style="font-size:16.64px;letter-spacing:0.604px;">Tato Evidence používá </span><span class="m" style="font-size:17.28px;font-weight:bold;letter-spacing:1.526px;">173</span><span class="m" style="font-size:16.64px;letter-spacing:0.780px;"> z 180 volitelných funkcí, </span><span class="m" style="font-size:16.64px;letter-spacing:0.614px;text-decoration:underline;">více o možnostech skrývání zde</span><span class="m" style="font-size:16.64px;letter-spacing:0.775px;">  |  Nacházíte se ve </span><span class="m" style="font-size:17.28px;font-weight:bold;letter-spacing:0.972px;">veřejné demoverzi</span><span class="m" style="font-size:16.64px;letter-spacing:1.098px;">, </span><span class="m" style="font-size:16.64px;letter-spacing:0.868px;text-decoration:underline;">pro rychlý </span><span class="m" style="font-size:17.28px;font-weight:bold;letter-spacing:0.767px;text-decoration:underline;">přechod</span><span class="m" style="font-size:16.64px;letter-spacing:0.760px;text-decoration:underline;"> na jiné demoverze pokračujte zde</span></div>
<div class="tx" style="left:9.8px;top:1429.46px;line-height:20px;"><span class="m" style="font-size:16.64px;letter-spacing:0.496px;">Prostředí </span><span class="m" style="font-size:16.64px;color:#2a4470;letter-spacing:0.488px;">Sonic.cgi</span><span class="m" style="font-size:16.64px;letter-spacing:0.865px;"> © 2005 - 2026 Petr Vyhnálek (Pro Neziskovky, </span><span class="m" style="font-size:16.64px;color:#2a4470;letter-spacing:0.861px;">www.pro-neziskovky.cz</span><span class="m" style="font-size:16.64px;letter-spacing:1.093px;">, +420 603 214 155, </span><span class="m" style="font-size:16.64px;color:#2a4470;letter-spacing:0.744px;">petr@pro-neziskovky.cz</span><span class="m" style="font-size:16.64px;letter-spacing:1.727px;">)</span></div>
</body></html>
